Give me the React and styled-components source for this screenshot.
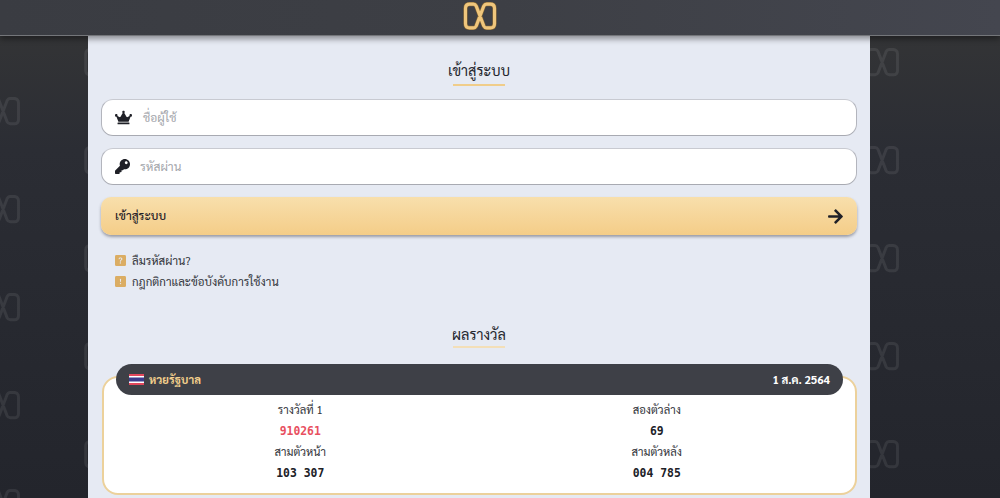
import React from "react";
import styled, { createGlobalStyle } from "styled-components";
import { FaCrown, FaKey, FaArrowRight } from "react-icons/fa";
import { BsQuestionSquareFill, BsExclamationSquareFill } from "react-icons/bs";

const logoPath =
  "M6 2 H9.500 C11 2 11.800 2.800 12.400 4 L19.600 23 C20.200 24.200 21 25 22.500 25 H26 C28.500 25 30 23.500 30 21 V6 C30 3.500 28.500 2 26 2 H22.500 C21 2 20.200 2.800 19.600 4 L12.400 23 C11.800 24.200 11 25 9.500 25 H6 C3.500 25 2 23.500 2 21 V6 C2 3.500 3.500 2 6 2 Z";

const tile = `<svg xmlns="http://www.w3.org/2000/svg" width="781" height="98"><g fill="none" stroke="#fff" stroke-opacity="0.08" stroke-width="2.6"><path transform="translate(83.500 47.300) scale(1.1)" d="${logoPath}"/><path transform="translate(-14.500 96.300) scale(1.1)" d="${logoPath}"/><path transform="translate(-14.500 -1.700) scale(1.1)" d="${logoPath}"/></g></svg>`;

const GlobalStyle = createGlobalStyle`
  html, body {
    margin: 0;
    height: 498px;
    overflow: hidden;
  }
  body {
    font-family: "Sarabun", "Noto Sans", "Liberation Sans", sans-serif;
    background: #2a2c33;
  }
`;

const Page = styled.div`
  height: 498px;
  overflow: hidden;
  background-image: url('data:image/svg+xml;utf8,${encodeURIComponent(tile)}'),
    linear-gradient(180deg, #333436 36px, #2b2d34 150px, #23252c 498px);
  background-size: 781px 98px, 100% 100%;
  background-repeat: repeat, no-repeat;
`;

const Header = styled.header`
  position: relative;
  z-index: 2;
  height: 35px;
  padding-right: 41px;
  display: flex;
  justify-content: center;
  background: linear-gradient(90deg, #3a3c42, #3d3f45 50%, #44464f);
  border-bottom: 1px solid #74767a;
  box-shadow: 0 3px 6px rgba(0, 0, 0, 0.4);
`;

const Logo = styled.svg`
  width: 34px;
  height: 28px;
  margin-top: 2px;
`;

const Panel = styled.main`
  width: 756px;
  height: 462px;
  margin-left: 88px;
  padding: 0 13px;
  background: #e6eaf3;
`;

const Heading = styled.h2`
  margin: 0 auto;
  width: 52px;
  display: flex;
  justify-content: center;
  white-space: nowrap;
  font-size: 14.500px;
  font-weight: 400;
  line-height: 22px;
  color: #25272e;
  padding-bottom: 3px;
  border-bottom: 2px solid #f0cd8a;
`;

const LoginHeading = styled(Heading)`
  padding-top: 23px;
`;

const ResultHeading = styled(Heading)`
  margin-top: 31px;
  padding-bottom: 1px;
  border-bottom-color: #f3dfb8;
`;

const Field = styled.div`
  height: 35px;
  margin-top: ${(p) => p.$top}px;
  display: flex;
  align-items: center;
  background: #fff;
  border: 1px solid #b3b5bd;
  border-top-color: #c8cad1;
  border-bottom-color: #a8aab2;
  border-radius: 12px;
  color: #1f2027;
  svg {
    margin-left: 13px;
    font-size: ${(p) => p.$icon}px;
  }
`;

const Placeholder = styled.span`
  margin-left: ${(p) => p.$gap}px;
  margin-top: -2px;
  font-size: 12px;
  color: #a3a5ab;
`;

const LoginButton = styled.button`
  width: 100%;
  height: 38px;
  margin-top: 12px;
  padding: 0 13px 0 14px;
  display: flex;
  align-items: center;
  justify-content: space-between;
  border: 0;
  border-radius: 10px;
  background: linear-gradient(180deg, #f8dfac, #f4cd88);
  box-shadow: 0 2px 3px rgba(60, 60, 70, 0.45);
  font: inherit;
  font-size: 11.800px;
  font-weight: 500;
  color: #1f2027;
  span {
    margin-top: -2px;
  }
  svg {
    font-size: 17px;
  }
`;

const HelpList = styled.ul`
  list-style: none;
  margin: 15px 0 0;
  padding: 0 0 0 14px;
`;

const HelpItem = styled.li`
  height: 21px;
  display: flex;
  align-items: center;
  gap: 6px;
  font-size: 11.500px;
  color: #33353b;
  svg {
    font-size: 11px;
    color: #dbad63;
  }
`;

const Card = styled.section`
  position: relative;
  margin-top: 28px;
  margin-left: 1px;
  height: 94px;
  padding: 21px 20px 0 18px;
  display: grid;
  grid-template-columns: 1fr 1fr;
  grid-auto-rows: 21px;
  background: #fff;
  border: 2px solid #ecd19b;
  border-radius: 16px;
`;

const CardBar = styled.div`
  position: absolute;
  top: -14px;
  left: 12px;
  right: 12px;
  height: 31px;
  padding: 0 13px;
  display: flex;
  align-items: center;
  gap: 5px;
  border-radius: 16px;
  background: #3e4047;
  font-size: 11.300px;
  font-weight: 700;
  color: #f4d08d;
`;

const BarDate = styled.span`
  margin-left: auto;
  color: #fff;
`;

const Cell = styled.div`
  display: flex;
  align-items: center;
  justify-content: center;
  font-size: 11.300px;
  color: #33353b;
`;

const Number = styled(Cell)`
  padding-top: 1px;
  font-family: "DejaVu Sans Mono", "Liberation Mono", monospace;
  font-size: 11.400px;
  font-weight: 700;
  color: ${(p) => p.$color || "#202127"};
`;

const ThaiFlag = () => (
  <svg width="15" height="11" viewBox="0 0 15 11">
    <rect width="15" height="11" fill="#fff" />
    <rect width="15" height="2" fill="#e2475c" />
    <rect y="9" width="15" height="2" fill="#e2475c" />
    <rect y="3.500" width="15" height="4" fill="#3c3b8c" />
  </svg>
);

const App = () => {
  return (
    <Page>
      <GlobalStyle />
      <Header>
        <Logo viewBox="0 0 32 27">
          <path d={logoPath} fill="none" stroke="#8a6a35" strokeWidth="4" />
          <path d={logoPath} fill="none" stroke="#efc67c" strokeWidth="3" />
        </Logo>
      </Header>
      <Panel>
        <LoginHeading>เข้าสู่ระบบ</LoginHeading>
        <Field $top={13} $icon={17}>
          <FaCrown />
          <Placeholder $gap={11}>ชื่อผู้ใช้</Placeholder>
        </Field>
        <Field $top={12} $icon={15}>
          <FaKey />
          <Placeholder $gap={10}>รหัสผ่าน</Placeholder>
        </Field>
        <LoginButton>
          <span>เข้าสู่ระบบ</span>
          <FaArrowRight />
        </LoginButton>
        <HelpList>
          <HelpItem>
            <BsQuestionSquareFill />
            ลืมรหัสผ่าน?
          </HelpItem>
          <HelpItem>
            <BsExclamationSquareFill />
            กฎกติกาและข้อบังคับการใช้งาน
          </HelpItem>
        </HelpList>
        <ResultHeading>ผลรางวัล</ResultHeading>
        <Card>
          <CardBar>
            <ThaiFlag />
            หวยรัฐบาล
            <BarDate>1 ส.ค. 2564</BarDate>
          </CardBar>
          <Cell>รางวัลที่ 1</Cell>
          <Cell>สองตัวล่าง</Cell>
          <Number $color="#e8505f">910261</Number>
          <Number>69</Number>
          <Cell>สามตัวหน้า</Cell>
          <Cell>สามตัวหลัง</Cell>
          <Number>103 307</Number>
          <Number>004 785</Number>
        </Card>
      </Panel>
    </Page>
  );
};

export default App;
